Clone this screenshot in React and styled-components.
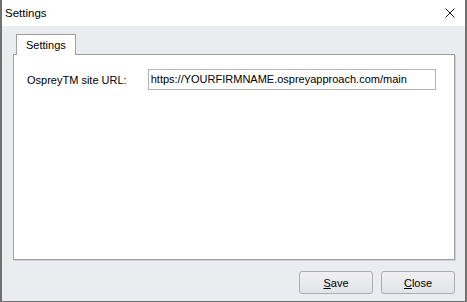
import React from 'react';
import styled, { createGlobalStyle } from 'styled-components';

const Global = createGlobalStyle`
  html, body { margin: 0; padding: 0; background: #ffffff; }
  body { font-family: "Liberation Sans", Arial, sans-serif; font-size: 11px; color: #000; }
`

const Window = styled.div`
  width: 467px;
  height: 302px;
  box-sizing: border-box;
  display: flex;
  flex-direction: column;
  border-left: 2px solid #707070;
  border-right: 2px solid #707070;
  border-bottom: 1px solid #707070;
  background: #ebecf0;
`

const TitleBar = styled.div`
  height: 26px;
  background: #ffffff;
  display: flex;
  align-items: center;
  justify-content: space-between;
  padding: 0 10px 0 3px;
  font-size: 11.5px;
`

const CloseX = styled.svg`
  width: 10px;
  height: 10px;
`

const Body = styled.div`
  flex: 1;
  display: flex;
  flex-direction: column;
  padding: 8px 10px 7px 11px;
`

const TabStrip = styled.div`
  display: flex;
  padding-left: 3px;
  position: relative;
  z-index: 1;
  margin-bottom: -1px;
`

const Tab = styled.div`
  width: 60px;
  height: 21px;
  box-sizing: border-box;
  background: #ffffff;
  border: 1px solid #a0a0a0;
  border-bottom: none;
  padding: 4px 0 0 9px;
  font-size: 11px;
`

const Panel = styled.div`
  flex: 1;
  background: #ffffff;
  border: 1px solid #a0a0a0;
  box-shadow: 1px 1px 0 #d0d1d6;
  padding: 14px 18px 0 13px;
`

const Row = styled.div`
  display: flex;
  align-items: center;
`

const Label = styled.span`
  width: 121px;
  font-size: 11px;
`

const Input = styled.div`
  width: 289px;
  height: 21px;
  box-sizing: border-box;
  border: 1px solid #b4b4b4;
  padding: 3px 0 0 2px;
  font-size: 11px;
  white-space: nowrap;
`

const Footer = styled.div`
  display: flex;
  justify-content: flex-end;
  gap: 8px;
  margin-top: 11px;
`

const Button = styled.button`
  width: 74px;
  height: 23px;
  box-sizing: border-box;
  border: 1px solid #adadad;
  border-radius: 3px;
  background: linear-gradient(#f0f0f2, #e3e4e8);
  font-family: "Liberation Sans", Arial, sans-serif;
  font-size: 11px;
  color: #000;
  padding: 0;
  u { text-decoration: underline; }
`

export default function App() {
  return (
    <>
      <Global />
      <Window>
        <TitleBar>
          <span>Settings</span>
          <CloseX viewBox="0 0 10 10">
            <path d="M0.5 0.5 L9.5 9.5 M9.5 0.5 L0.5 9.5" stroke="#000" strokeWidth="0.9" />
          </CloseX>
        </TitleBar>
        <Body>
          <TabStrip>
            <Tab>Settings</Tab>
          </TabStrip>
          <Panel>
            <Row>
              <Label>OspreyTM site URL:</Label>
              <Input>https://YOURFIRMNAME.ospreyapproach.com/main</Input>
            </Row>
          </Panel>
          <Footer>
            <Button><u>S</u>ave</Button>
            <Button><u>C</u>lose</Button>
          </Footer>
        </Body>
      </Window>
    </>
  );
}
